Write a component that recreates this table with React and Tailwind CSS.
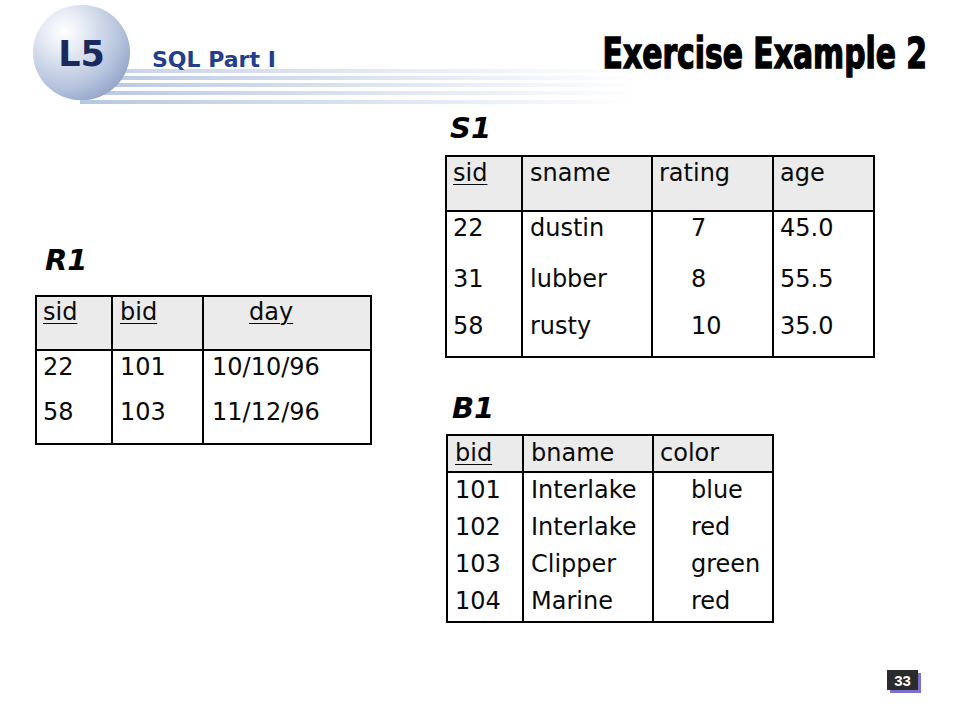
import React from "react";

const S1 = {
  heads: [
    { t: "sid", u: true, c: "w-[74px] pl-[6px]" },
    { t: "sname", c: "w-[130px] border-l-2 border-black pl-[7px]" },
    { t: "rating", c: "w-[121px] border-l-2 border-black pl-[6px]" },
    { t: "age", c: "w-[101px] border-l-2 border-black pl-[6px]" },
  ],
  cells: [
    "w-[74px] pl-[6px]",
    "w-[130px] border-l-2 border-black pl-[7px]",
    "w-[121px] border-l-2 border-black pl-[38px]",
    "w-[101px] border-l-2 border-black pl-[6px]",
  ],
  rows: [
    { h: "h-[51px] pt-[2px]", v: ["22", "dustin", "7", "45.0"] },
    { h: "h-[47px] pt-[2px]", v: ["31", "lubber", "8", "55.5"] },
    { h: "h-[46px] pt-[2px]", v: ["58", "rusty", "10", "35.0"] },
  ],
};

const R1 = {
  heads: [
    { t: "sid", u: true, c: "w-[74px] pl-[6px]" },
    { t: "bid", u: true, c: "w-[91px] border-l-2 border-black pl-[7px]" },
    { t: "day", u: true, c: "w-[168px] border-l-2 border-black pl-[45px]" },
  ],
  cells: [
    "w-[74px] pl-[6px]",
    "w-[91px] border-l-2 border-black pl-[7px]",
    "w-[168px] border-l-2 border-black pl-[8px]",
  ],
  rows: [
    { h: "h-[45px] pt-[2px]", v: ["22", "101", "10/10/96"] },
    { h: "h-[47px] pt-[2px]", v: ["58", "103", "11/12/96"] },
  ],
};

const B1 = {
  heads: [
    { t: "bid", u: true, c: "w-[74px] pl-[7px]" },
    { t: "bname", c: "w-[130px] border-l-2 border-black pl-[7px]" },
    { t: "color", c: "w-[120px] border-l-2 border-black pl-[6px]" },
  ],
  cells: [
    "w-[74px] pl-[7px]",
    "w-[130px] border-l-2 border-black pl-[7px]",
    "w-[120px] border-l-2 border-black pl-[37px]",
  ],
  rows: [
    { h: "h-[37px] pt-[3px]", v: ["101", "Interlake", "blue"] },
    { h: "h-[37px] pt-[3px]", v: ["102", "Interlake", "red"] },
    { h: "h-[37px] pt-[3px]", v: ["103", "Clipper", "green"] },
    { h: "h-[37px] pt-[3px]", v: ["104", "Marine", "red"] },
  ],
};

function Table({ data, outer, headH, headPt }) {
  return (
    <div className={"border-2 border-black " + outer}>
      <div className={"flex bg-[#ebebeb] border-b-2 border-black " + headH}>
        {data.heads.map((h, i) => (
          <div key={i} className={"h-full " + headPt + " " + h.c}>
            <span className={h.u ? "underline decoration-1 underline-offset-[3px]" : ""}>{h.t}</span>
          </div>
        ))}
      </div>
      {data.rows.map((r, ri) => (
        <div key={ri} className="flex">
          {r.v.map((v, ci) => (
            <div key={ci} className={data.cells[ci] + " " + r.h}>
              {v}
            </div>
          ))}
        </div>
      ))}
    </div>
  );
}

function Label({ children, cls }) {
  return (
    <div className={"text-[29px] font-bold italic leading-[34px] text-black " + cls}>{children}</div>
  );
}

export default function App() {
  return (
    <div className="relative w-[960px] h-[720px] bg-white overflow-hidden flex flex-col font-['DejaVu_Sans',sans-serif] text-[24px] leading-[28px] text-[#0a0a0a]">
      {/* Header */}
      <div className="relative h-[108px] flex items-start">
        <div className="absolute left-[80px] top-[69px] w-[560px] flex flex-col gap-[3px]">
          <div className="h-[4px] bg-gradient-to-r from-[#c3d0e6] via-[#e2e8f3] to-transparent" />
          <div className="h-[4px] bg-gradient-to-r from-[#b8c7e1] via-[#dbe3f0] to-transparent" />
          <div className="h-[4px] bg-gradient-to-r from-[#b8c7e1] via-[#dbe3f0] to-transparent" />
          <div className="h-[4px] mt-[1px] bg-gradient-to-r from-[#b8c7e1] via-[#dbe3f0] to-transparent" />
          <div className="h-[4px] mt-[2px] bg-gradient-to-r from-[#b8c7e1] via-[#dbe3f0] to-transparent" />
        </div>
        <div className="relative z-10 ml-[33px] mt-[5px] w-[97px] h-[95px] rounded-full bg-[radial-gradient(circle_at_32%_28%,#ffffff_0%,#e6ebf4_22%,#b4c2dc_60%,#8598c0_88%,#9aaacb_100%)] flex items-center justify-center">
          <span className="text-[35px] font-bold leading-[40px] text-[#1b2a5c] mt-[2px]">L5</span>
        </div>
        <div className="relative z-10 ml-[22px] mt-[47px] text-[22px] font-bold leading-[26px] text-[#233f8c]">
          SQL Part I
        </div>
        <div className="relative z-10 ml-auto mr-[33px] mt-[30px] origin-right scale-x-[0.71] text-[42px] font-bold leading-[48px] text-black whitespace-nowrap [-webkit-text-stroke:1.5px_#000]">
          Exercise Example 2
        </div>
      </div>

      {/* Body */}
      <div className="flex items-start">
        <div className="ml-[35px] w-[337px] mt-[135px] flex flex-col">
          <Label cls="pl-[10px] mb-[18px]">R1</Label>
          <Table data={R1} outer="w-[337px]" headH="h-[54px]" headPt="pt-[1px]" />
        </div>
        <div className="ml-[73px] mt-[3px] flex flex-col">
          <Label cls="pl-[5px] mb-[10px]">S1</Label>
          <Table data={S1} outer="w-[430px]" headH="h-[55px]" headPt="pt-[2px]" />
          <Label cls="pl-[7px] mt-[33px] mb-[9px]">B1</Label>
          <div className="ml-[1px]">
            <Table data={B1} outer="w-[328px]" headH="h-[37px]" headPt="pt-[3px]" />
          </div>
        </div>
      </div>

      {/* Footer page number */}
      <div className="mt-auto mb-[27px] mr-[39px] flex justify-end">
        <div className="relative w-[34px] h-[23px]">
          <div className="absolute left-[3px] top-[3px] w-[31px] h-[20px] bg-[#7b6fd2]" />
          <div className="absolute left-0 top-0 w-[31px] h-[20px] bg-[#2b2b2b] flex items-center justify-center text-white text-[15px] font-bold leading-none font-['Liberation_Sans',sans-serif]">
            33
          </div>
        </div>
      </div>
    </div>
  );
}
